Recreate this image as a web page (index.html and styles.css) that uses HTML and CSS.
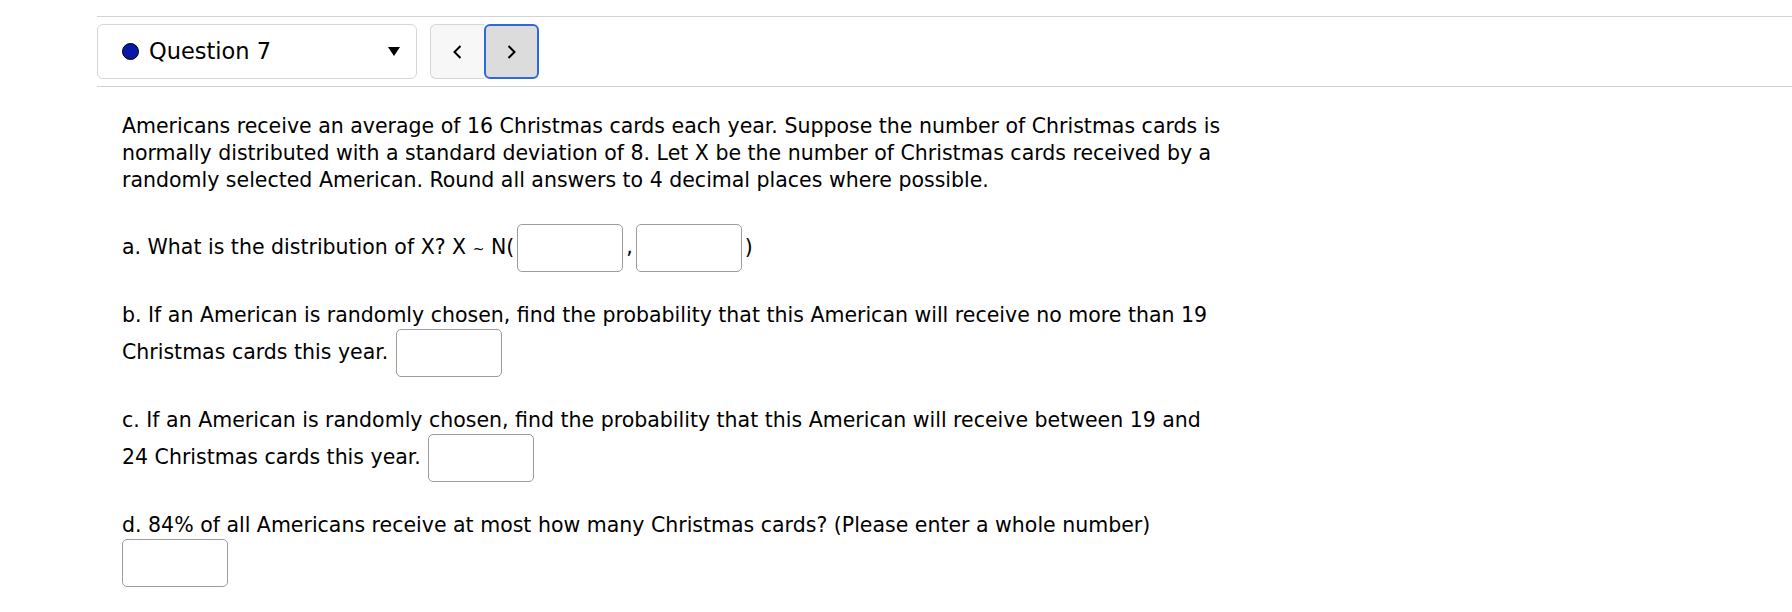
FILE: index.html
```html
<!DOCTYPE html>
<html lang="en">
<head>
    <meta charset="UTF-8">
    <title>Question 7</title>
    <link rel="stylesheet" href="styles.css">
</head>
<body>
    <!-- Question navigation -->
    <div class="qnav">
        <div class="qselect">
            <span class="qdot"></span>
            <span class="qlabel">Question 7</span>
            <svg class="qcaret" width="12" height="9" viewBox="0 0 12 9"><polygon points="0,0 12,0 6,9" fill="#000"/></svg>
        </div>
        <div class="qbtns">
            <button class="qbtn prev" type="button">
                <svg width="9" height="14" viewBox="0 0 9 14"><polyline points="7.5,1 1.5,7 7.5,13" fill="none" stroke="#000" stroke-width="2"/></svg>
            </button>
            <button class="qbtn next" type="button">
                <svg width="9" height="14" viewBox="0 0 9 14"><polyline points="1.5,1 7.5,7 1.5,13" fill="none" stroke="#000" stroke-width="2"/></svg>
            </button>
        </div>
    </div>

    <!-- Question body -->
    <div class="question">
        <p>Americans receive an average of 16 Christmas cards each year. Suppose the number of Christmas cards is normally distributed with a standard deviation of 8. Let X be the number of Christmas cards received by a randomly selected American. Round all answers to 4 decimal places where possible.</p>
        <p>a. What is the distribution of X? X <span class="tilde">~</span> N(<input class="ans tight" type="text">,<input class="ans tight" type="text">)</p>
        <p>b. If an American is randomly chosen, find the probability that this American will receive no more than 19 Christmas cards this year. <input class="ans" type="text"></p>
        <p>c. If an American is randomly chosen, find the probability that this American will receive between 19 and 24 Christmas cards this year. <input class="ans" type="text"></p>
        <p>d. 84% of all Americans receive at most how many Christmas cards? (Please enter a whole number)<br><input class="ans first" type="text"></p>
    </div>
</body>
</html>
```

FILE: styles.css
```css
/* Basic Reset */
body, p {
    margin: 0;
    padding: 0;
}

body {
    background-color: #fff;
    color: #000;
    font-family: 'DejaVu Sans', Verdana, sans-serif;
    font-size: 20.5px;
    line-height: 27px;
}

/* Question navigation bar */
.qnav {
    display: flex;
    align-items: center;
    gap: 13px;
    margin: 16px 0 0 97px;
    padding: 7px 0;
    border-top: 1px solid #d3d3d3;
    border-bottom: 1px solid #d3d3d3;
}

.qselect {
    display: flex;
    align-items: center;
    box-sizing: border-box;
    width: 320px;
    height: 55px;
    padding: 0 16px 0 24px;
    border: 1px solid #d6d6d6;
    border-radius: 6px;
    background-color: #fff;
}

.qdot {
    width: 15px;
    height: 15px;
    border: 1.5px solid #000;
    border-radius: 50%;
    background-color: #0a18a8;
}

.qlabel {
    margin-left: 10px;
    flex: 1;
    font-size: 22.5px;
}

.qbtns {
    display: flex;
    height: 55px;
}

.qbtn {
    display: flex;
    align-items: center;
    justify-content: center;
    box-sizing: border-box;
    height: 55px;
    padding: 0;
    cursor: pointer;
}

.qbtn.prev {
    width: 54px;
    background-color: #f7f7f7;
    border: 1px solid #d6d6d6;
    border-right: none;
    border-radius: 6px 0 0 6px;
}

.qbtn.next {
    width: 55px;
    background-color: #dcdcdc;
    border: 2.5px solid #2c6bd3;
    border-radius: 6px;
}

/* Question text */
.question {
    margin: 26px 0 0 122px;
    max-width: 1110px;
}

.question p {
    margin-bottom: 30px;
}

.tilde {
    font-size: 14px;
}

.ans {
    box-sizing: border-box;
    width: 106px;
    height: 48px;
    margin: 0 1px;
    padding: 0 6px;
    border: 1px solid #9c9c9c;
    border-radius: 5px;
    font-family: 'DejaVu Sans', sans-serif;
    font-size: 16px;
    background-color: #fff;
}

.ans.tight {
    margin: 0 3px;
}

.ans.first {
    margin-left: 0;
}
```
